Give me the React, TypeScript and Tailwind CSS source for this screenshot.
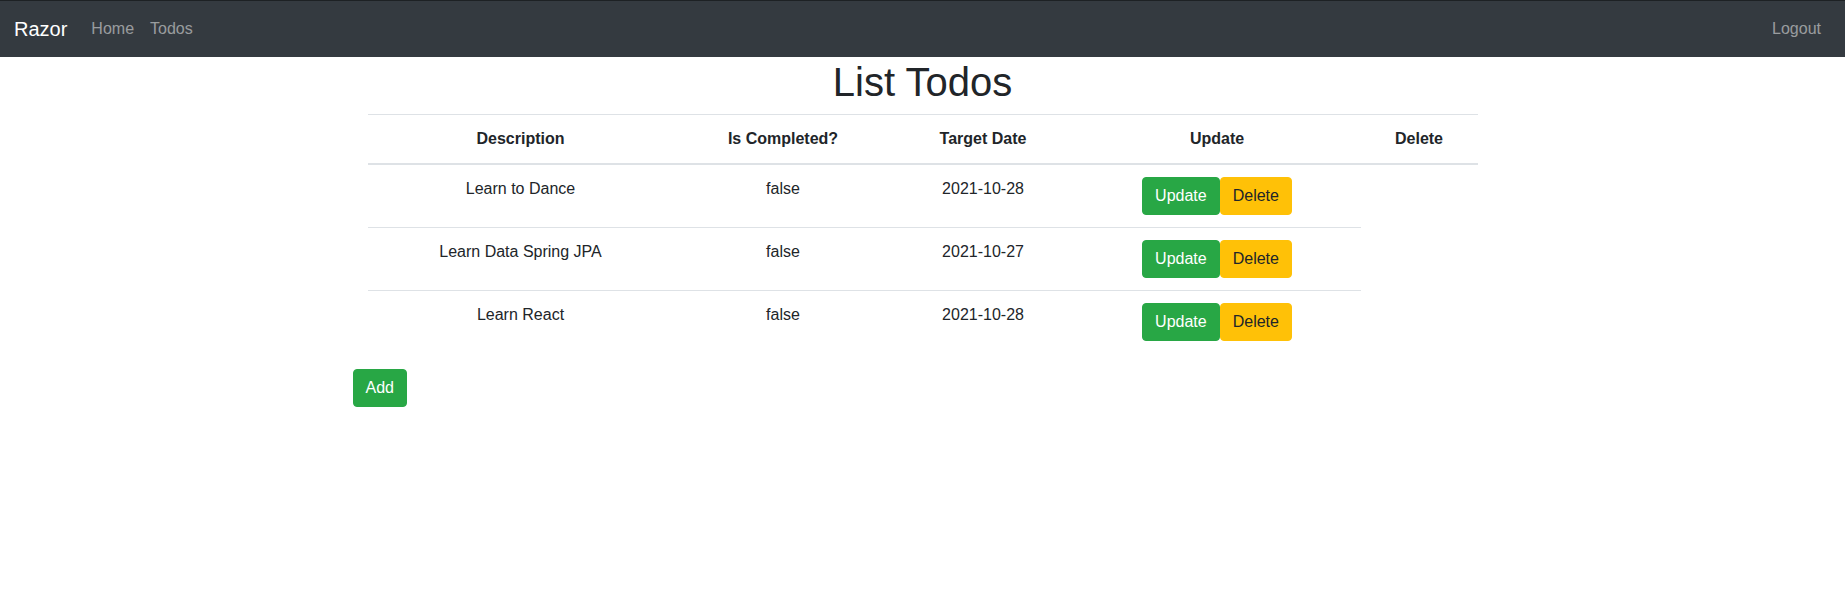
const todos = [
  { id: 1, description: "Learn to Dance", done: false, targetDate: "2021-10-28" },
  { id: 2, description: "Learn Data Spring JPA", done: false, targetDate: "2021-10-27" },
  { id: 3, description: "Learn React", done: false, targetDate: "2021-10-28" },
];

export default function App() {
  return (
    <div className="min-h-[608px] bg-white font-['Liberation_Sans',Arial,sans-serif] text-base text-[#212529]">
      <nav className="flex h-[57px] items-center border-t border-[#1d2124] bg-[#343a40] pl-[14px] pr-4">
        <a href="#" className="mr-4 py-[5px] text-[20px] leading-[30px] text-white">
          Razor
        </a>
        <ul className="flex">
          <li>
            <a href="#" className="block px-2 py-2 leading-6 text-white/50">
              Home
            </a>
          </li>
          <li>
            <a href="#" className="block px-2 py-2 leading-6 text-white/50">
              Todos
            </a>
          </li>
        </ul>
        <ul className="ml-auto flex">
          <li>
            <a href="#" className="block px-2 py-2 leading-6 text-white/50">
              Logout
            </a>
          </li>
        </ul>
      </nav>

      <div className="mx-auto w-[1140px] px-[15px]">
        <h1 className="mb-2 pt-px text-center text-[40px] font-medium leading-[48px]">List Todos</h1>
        <div>
          <table className="mb-4 w-full table-fixed border-collapse">
            <thead>
              <tr>
                <th className="w-[306px] border-t border-b-2 border-[#dee2e6] p-3 text-center align-bottom leading-6 font-bold">
                  Description
                </th>
                <th className="w-[219px] border-t border-b-2 border-[#dee2e6] p-3 text-center align-bottom leading-6 font-bold">
                  Is Completed?
                </th>
                <th className="w-[181px] border-t border-b-2 border-[#dee2e6] p-3 text-center align-bottom leading-6 font-bold">
                  Target Date
                </th>
                <th className="w-[287px] border-t border-b-2 border-[#dee2e6] p-3 text-center align-bottom leading-6 font-bold">
                  Update
                </th>
                <th className="w-[117px] border-t border-b-2 border-[#dee2e6] p-3 text-center align-bottom leading-6 font-bold">
                  Delete
                </th>
              </tr>
            </thead>
            <tbody>
              {todos.map((todo) => (
                <tr key={todo.id}>
                  <td className="border-t border-[#dee2e6] p-3 text-center align-top leading-6">{todo.description}</td>
                  <td className="border-t border-[#dee2e6] p-3 text-center align-top leading-6">{todo.done.toString()}</td>
                  <td className="border-t border-[#dee2e6] p-3 text-center align-top leading-6">{todo.targetDate}</td>
                  <td className="border-t border-[#dee2e6] p-3 text-center align-top leading-6">
                    <button className="rounded border border-[#28a745] bg-[#28a745] px-3 py-1.5 leading-6 text-white">
                      Update
                    </button>
                    <button className="rounded border border-[#ffc107] bg-[#ffc107] px-3 py-1.5 leading-6 text-[#212529]">
                      Delete
                    </button>
                  </td>
                </tr>
              ))}
            </tbody>
          </table>
          <div className="-mx-[15px] flex">
            <button className="rounded border border-[#28a745] bg-[#28a745] px-3 py-1.5 leading-6 text-white">
              Add
            </button>
          </div>
        </div>
      </div>
    </div>
  );
}
